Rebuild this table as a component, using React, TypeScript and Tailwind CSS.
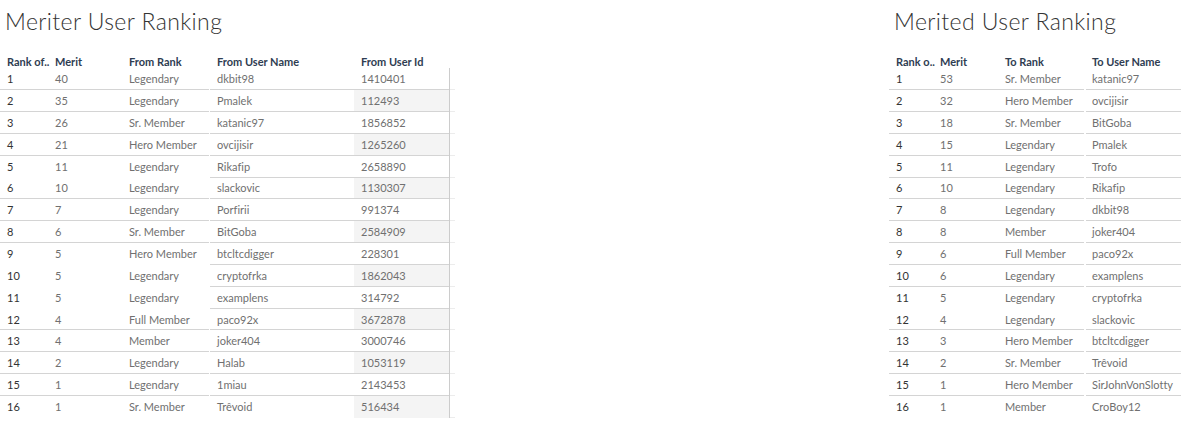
const font = "font-['Lato','Liberation_Sans',sans-serif] [font-variant-ligatures:none]";

type Col = { label: string; width: number; pad: number; key: number; dark?: boolean };

const meriterA: Col[] = [
  { label: 'Rank of..', width: 48, pad: 7, key: 0, dark: true },
  { label: 'Merit', width: 74, pad: 7, key: 1 },
  { label: 'From Rank', width: 87, pad: 7, key: 2 },
];
const meriterB: Col[] = [
  { label: 'From User Name', width: 144, pad: 7, key: 3 },
  { label: 'From User Id', width: 95, pad: 7, key: 4 },
];

const meritedA: Col[] = [
  { label: 'Rank o..', width: 44, pad: 7, key: 0, dark: true },
  { label: 'Merit', width: 65, pad: 7, key: 1 },
  { label: 'To Rank', width: 86, pad: 7, key: 2 },
];
const meritedB: Col[] = [{ label: 'To User Name', width: 95, pad: 6, key: 3 }];

const meriters: string[][] = [
  ['1', '40', 'Legendary', 'dkbit98', '1410401'],
  ['2', '35', 'Legendary', 'Pmalek', '112493'],
  ['3', '26', 'Sr. Member', 'katanic97', '1856852'],
  ['4', '21', 'Hero Member', 'ovcijisir', '1265260'],
  ['5', '11', 'Legendary', 'Rikafip', '2658890'],
  ['6', '10', 'Legendary', 'slackovic', '1130307'],
  ['7', '7', 'Legendary', 'Porfirii', '991374'],
  ['8', '6', 'Sr. Member', 'BitGoba', '2584909'],
  ['9', '5', 'Hero Member', 'btcltcdigger', '228301'],
  ['10', '5', 'Legendary', 'cryptofrka', '1862043'],
  ['11', '5', 'Legendary', 'examplens', '314792'],
  ['12', '4', 'Full Member', 'paco92x', '3672878'],
  ['13', '4', 'Member', 'joker404', '3000746'],
  ['14', '2', 'Legendary', 'Halab', '1053119'],
  ['15', '1', 'Legendary', '1miau', '2143453'],
  ['16', '1', 'Sr. Member', 'Trêvoid', '516434'],
];

const merited: string[][] = [
  ['1', '53', 'Sr. Member', 'katanic97'],
  ['2', '32', 'Hero Member', 'ovcijisir'],
  ['3', '18', 'Sr. Member', 'BitGoba'],
  ['4', '15', 'Legendary', 'Pmalek'],
  ['5', '11', 'Legendary', 'Trofo'],
  ['6', '10', 'Legendary', 'Rikafip'],
  ['7', '8', 'Legendary', 'dkbit98'],
  ['8', '8', 'Member', 'joker404'],
  ['9', '6', 'Full Member', 'paco92x'],
  ['10', '6', 'Legendary', 'examplens'],
  ['11', '5', 'Legendary', 'cryptofrka'],
  ['12', '4', 'Legendary', 'slackovic'],
  ['13', '3', 'Hero Member', 'btcltcdigger'],
  ['14', '2', 'Sr. Member', 'Trêvoid'],
  ['15', '1', 'Hero Member', 'SirJohnVonSlotty'],
  ['16', '1', 'Member', 'CroBoy12'],
];

// rows (0-based) that have no divider underneath, per pane
const noLineMeriterA = [4, 8, 9, 10, 15];
const noLineMeriterB = [15];
const noLineMeritedA = [10, 15];
const noLineMeritedB = [10, 15];

function Pane({
  cols,
  rows,
  noLine,
  bandKey,
}: {
  cols: Col[];
  rows: string[][];
  noLine: number[];
  bandKey?: number;
}) {
  return (
    <div className="flex flex-col">
      <div className="flex h-[22.3px] items-end">
        {cols.map((c) => (
          <div
            key={c.label}
            style={{ width: c.width, paddingLeft: c.pad }}
            className="shrink-0 whitespace-nowrap text-[11px] font-bold leading-[12px] text-[#2f3d52]"
          >
            {c.label}
          </div>
        ))}
      </div>
      {rows.map((r, i) => (
        <div
          key={i}
          className={`flex h-[21.857px] ${noLine.includes(i) ? '' : 'border-b border-[#d4d4d4]'}`}
        >
          {cols.map((c) => (
            <div
              key={c.label}
              style={{ width: c.width, paddingLeft: c.pad }}
              className={`flex shrink-0 items-center whitespace-nowrap pt-[1px] text-[11px] leading-[12px] ${
                c.dark ? 'text-[#333333]' : 'text-[#707070]'
              } ${bandKey === c.key && i % 2 === 1 ? 'bg-[#f4f4f4]' : ''}`}
            >
              {r[c.key]}
            </div>
          ))}
        </div>
      ))}
    </div>
  );
}

export default function App() {
  return (
    <div className={`flex h-[430px] w-[1181px] justify-between overflow-hidden bg-white ${font}`}>
      <div className="flex flex-col">
        <div className="h-[46px] pl-[5px] pt-[10px] text-[23px] font-light leading-[23px] tracking-[0.4px] text-[#333333]">
          Meriter User Ranking
        </div>
        <div className="flex">
          <Pane cols={meriterA} rows={meriters} noLine={noLineMeriterA} />
          <div className="w-[1px]" />
          <Pane cols={meriterB} rows={meriters} noLine={noLineMeriterB} bandKey={4} />
          <div className="flex flex-col">
            <div className="h-[22.3px]" />
            <div className="flex h-[349.7px] w-[6px] flex-col border-l border-[#cccccc]">
              {meriters.map((_, i) => (
                <div key={i} className="h-[21.857px] border-b border-[#ececec]" />
              ))}
            </div>
          </div>
        </div>
      </div>
      <div className="flex w-[292px] flex-col">
        <div className="h-[46px] pl-[5px] pt-[10px] text-[23px] font-light leading-[23px] tracking-[0.4px] text-[#333333]">
          Merited User Ranking
        </div>
        <div className="flex">
          <Pane cols={meritedA} rows={merited} noLine={noLineMeritedA} />
          <div className="w-[2px]" />
          <Pane cols={meritedB} rows={merited} noLine={noLineMeritedB} />
        </div>
      </div>
    </div>
  );
}
